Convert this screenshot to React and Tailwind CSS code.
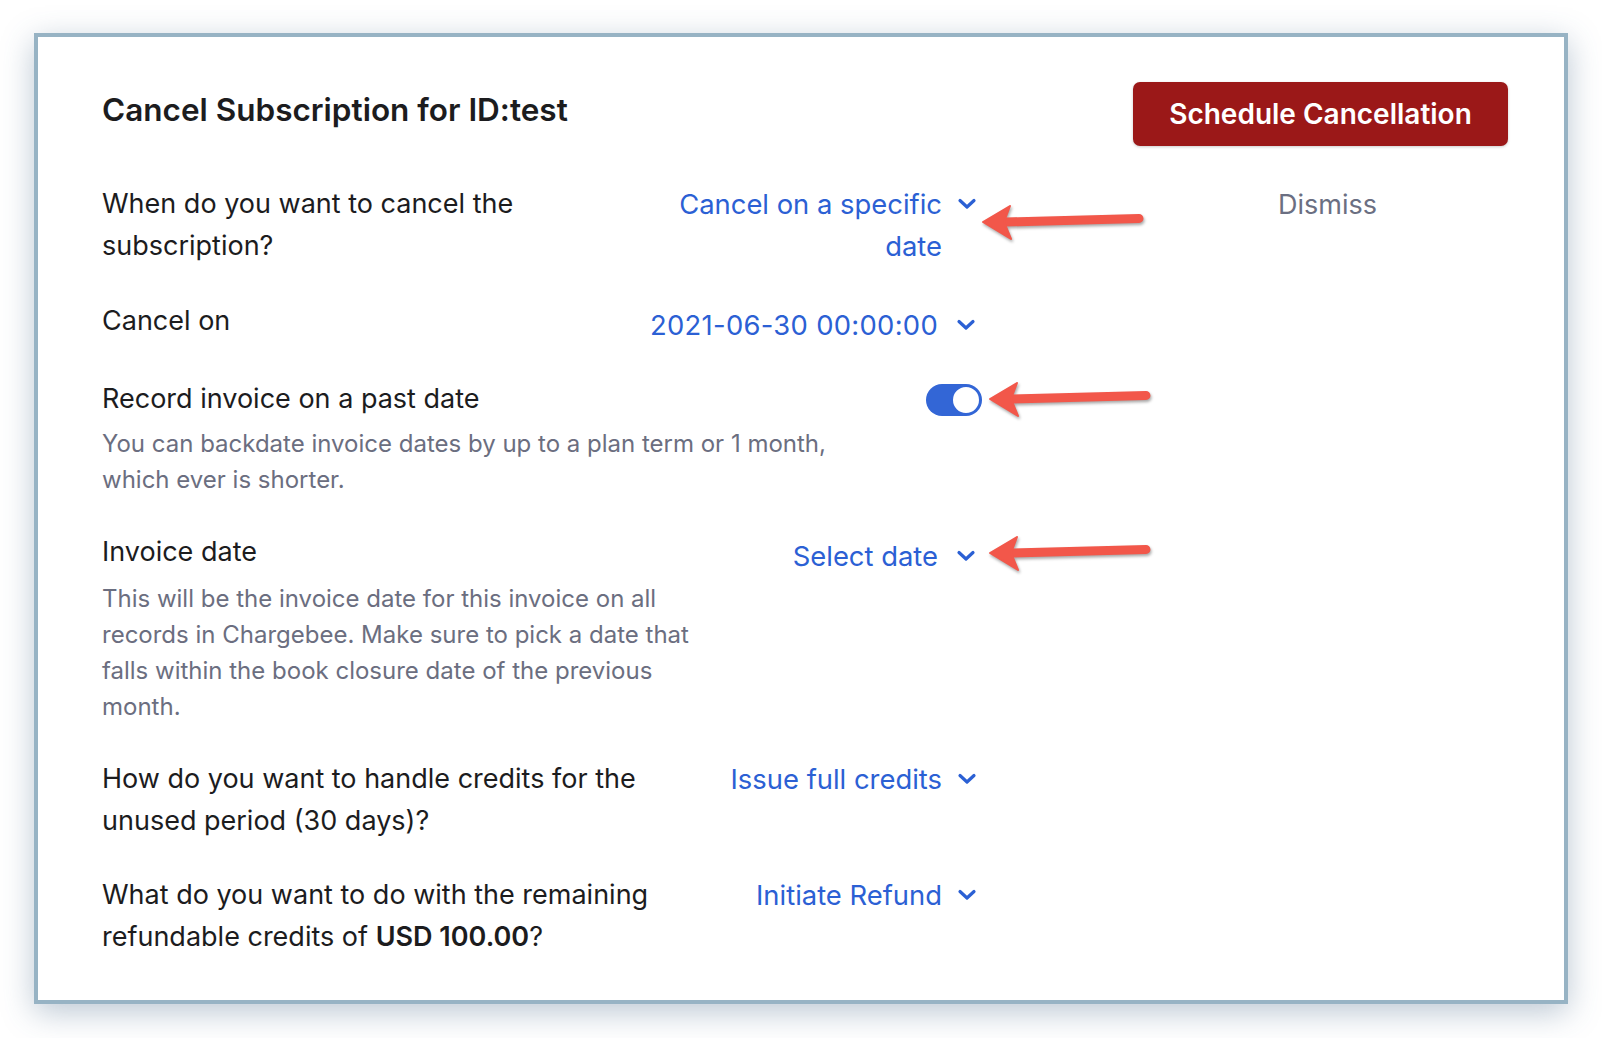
const font = { fontFamily: "Inter, 'Noto Sans', sans-serif" };

function Chevron() {
  return (
    <svg width="20" height="12" viewBox="0 0 20 12" className="shrink-0 text-[#2b60d4]">
      <polyline points="3,2.5 10,9 17,2.5" fill="none" stroke="currentColor" strokeWidth="3.2" strokeLinecap="round" strokeLinejoin="round" />
    </svg>
  );
}

function Dropdown({ lines, className = "", textClass = "" }) {
  return (
    <div className={`flex items-start gap-[15px] ${className}`}>
      <div className={`text-right text-[27.4px] leading-[42px] text-[#2b60d4] ${textClass}`}>
        {lines.map((l) => (
          <div key={l}>{l}</div>
        ))}
      </div>
      <div className="h-[42px] flex items-center">
        <Chevron />
      </div>
    </div>
  );
}

function Arrow({ className }) {
  return (
    <svg
      width="172"
      height="44"
      viewBox="0 0 172 44"
      className={`absolute drop-shadow-[1px_2px_1.5px_rgba(0,0,0,0.35)] ${className}`}
    >
      <line x1="26" y1="20" x2="160" y2="16.5" stroke="#f2574a" strokeWidth="9" strokeLinecap="round" />
      <polygon points="4,20 31,4 25,20 32,37" fill="#f2574a" stroke="#f2574a" strokeWidth="2" strokeLinejoin="round" />
    </svg>
  );
}

function Toggle({ on = true }) {
  return (
    <div className={`w-[56px] h-[32px] rounded-full flex items-center p-[1px] ${on ? "bg-[#3366d6] justify-end" : "bg-gray-300 justify-start"}`}>
      <div className="w-[30px] h-[30px] rounded-full bg-white border-2 border-[#3366d6]" />
    </div>
  );
}

const Row = ({ label, control, className = "" }) => (
  <div className={`flex justify-between items-start ${className}`}>
    <div className="text-[27px] leading-[42px] text-[#1c1c1e]">{label}</div>
    {control}
  </div>
);

export default function App() {
  return (
    <div className="w-[1602px] h-[1038px] bg-white pl-[34px] pt-[33px]" style={font}>
      <div className="relative w-[1534px] h-[971px] bg-white border-4 border-[#97b3c4] shadow-[0_8px_30px_rgba(60,95,130,0.35)] flex pl-[64px] pr-[56px]">
        {/* form column */}
        <div className="w-[875px] pt-[55px]">
          <h1 className="text-[31.5px] leading-[36px] font-semibold text-[#1c1c1e]">
            Cancel Subscription for ID:test
          </h1>

          <Row
            className="mt-[55px]"
            label={<>When do you want to cancel the<br />subscription?</>}
            control={<Dropdown lines={["Cancel on a specific", "date"]} />}
          />

          <Row
            className="mt-[33px]"
            label="Cancel on"
            control={
              <Dropdown
                lines={["2021-06-30 00:00:00"]}
                className="mt-[4px] mr-[1px] gap-[18px]"
                textClass="tracking-[0.3px] text-[#1f57d6]"
              />
            }
          />

          <div className="mt-[32px]">
            <div className="flex justify-between items-start">
              <div className="text-[27px] leading-[42px] text-[#1c1c1e]">Record invoice on a past date</div>
              <div className="mt-[6px] -mr-[5px]">
                <Toggle />
              </div>
            </div>
            <div className="text-[24px] leading-[36px] text-[#6b6e80] mt-[6px]">
              You can backdate invoice dates by up to a plan term or 1 month,
              <br />
              which ever is shorter.
            </div>
          </div>

          <div className="mt-[33px]">
            <div className="flex justify-between items-start">
              <div className="text-[27px] leading-[42px] text-[#1c1c1e]">Invoice date</div>
              <Dropdown lines={["Select date"]} className="mt-[4px] mr-[1px] gap-[18px]" textClass="text-[#1f57d6]" />
            </div>
            <div className="text-[24px] leading-[36px] text-[#6b6e80] mt-[4px]">
              This will be the invoice date for this invoice on all
              <br />
              records in Chargebee. Make sure to pick a date that
              <br />
              falls within the book closure date of the previous
              <br />
              month.
            </div>
          </div>

          <Row
            className="mt-[33px]"
            label={<>How do you want to handle credits for the<br />unused period (30 days)?</>}
            control={<Dropdown lines={["Issue full credits"]} />}
          />

          <Row
            className="mt-[32px]"
            label={
              <>
                What do you want to do with the remaining
                <br />
                refundable credits of <span className="font-semibold">USD 100.00</span>?
              </>
            }
            control={<Dropdown lines={["Initiate Refund"]} />}
          />
        </div>

        {/* actions */}
        <div className="ml-auto w-[375px] pt-[45px] flex flex-col items-center">
          <button className="w-[375px] h-[64px] rounded-[7px] bg-[#9b1818] text-white text-[28px] font-semibold shadow-[0_1px_3px_rgba(0,0,0,0.2)]">
            Schedule Cancellation
          </button>
          <button className="mt-[38px] text-[27px] leading-[42px] text-[#6b6f82] pl-[14px]">Dismiss</button>
        </div>

        <Arrow className="left-[941px] top-[165px]" />
        <Arrow className="left-[948px] top-[342px]" />
        <Arrow className="left-[948px] top-[496px]" />
      </div>
    </div>
  );
}
